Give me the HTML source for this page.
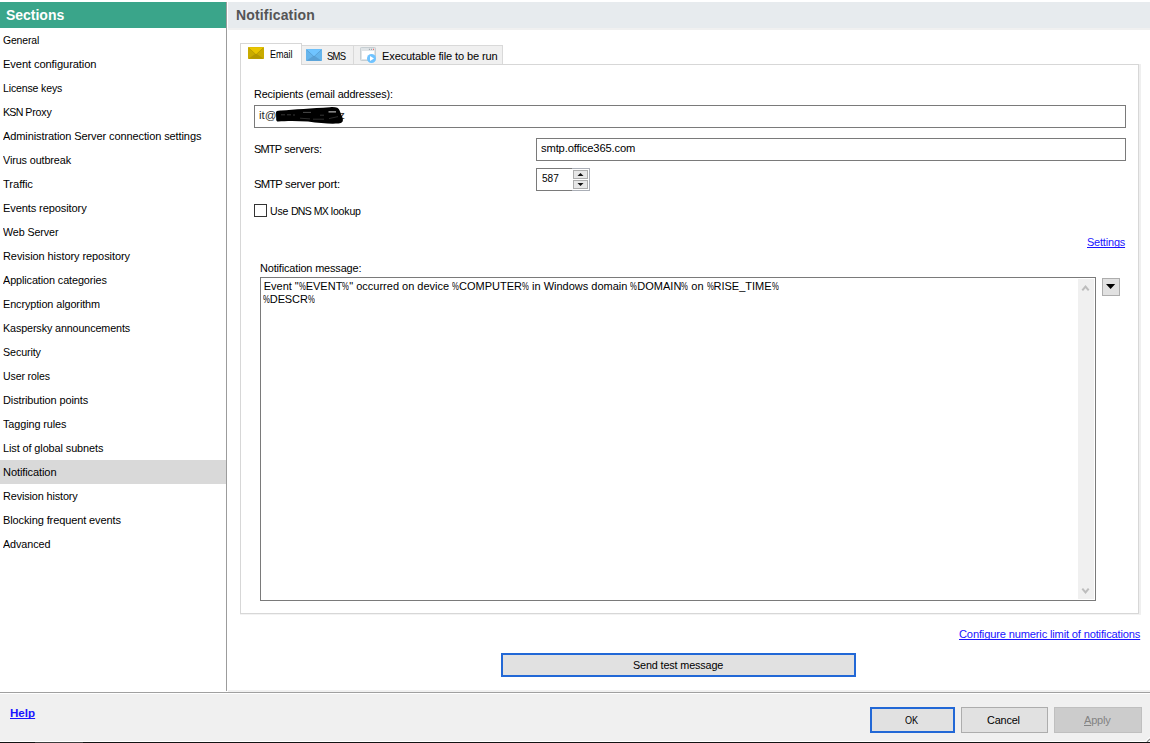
<!DOCTYPE html>
<html lang="en">
<head>
<meta charset="utf-8">
<title>Notification</title>
<style>
html,body{margin:0;padding:0;}
body{width:1150px;height:743px;overflow:hidden;background:#fff;position:relative;
  font-family:"Liberation Sans",sans-serif;font-size:11px;color:#000;}
.abs{position:absolute;}
.t{position:absolute;white-space:nowrap;line-height:13px;height:13px;font-size:11.6px;margin-top:-1px;}
#t_l1,#t_l2{font-size:11px;margin-top:0;}
/* sidebar */
#sechead{left:0;top:2px;width:226px;height:26px;background:#3aa58a;}
#sechead span{position:absolute;left:6px;top:5px;font-weight:bold;font-size:14px;line-height:17px;color:#fff;white-space:nowrap;}
#vline{left:226px;top:2px;width:1px;height:689px;background:#9c9c9c;}
#nav{left:0;top:28px;width:226px;margin:0;padding:0;list-style:none;}
#nav li{height:24px;line-height:24px;padding-left:3px;white-space:nowrap;font-size:11.6px;}
#nav li.sel{background:#d9d9d9;}
/* header */
#mainhead{left:228px;top:2px;width:922px;height:26px;background:#e7ebee;}
#mainhead2{left:228px;top:28px;width:922px;height:2px;background:#f0f0f0;}
#mainhead span{position:absolute;left:8px;top:5px;font-weight:bold;font-size:14px;line-height:17px;color:#555;white-space:nowrap;}
/* panel */
#panel{left:240px;top:64px;width:897px;height:548px;border:1px solid #d7d7d7;box-shadow:2px 0 0 #efefef,0 1px 0 #f3f3f3,2px 1px 0 #f1f1f1;}
.tab{position:absolute;box-sizing:border-box;background:#f0f0f0;border:1px solid #d9d9d9;border-bottom:none;}
#tab1{left:240px;top:43px;width:62px;height:22px;background:#fff;border-color:#d7d7d7;}
#tab2{left:301px;top:45px;width:53px;height:19px;border-left:none;}
#tab3{left:353px;top:45px;width:150px;height:19px;}
input,textarea{font-family:"Liberation Sans",sans-serif;}
.box{position:absolute;box-sizing:border-box;border:1px solid #7a7a7a;background:#fff;}
.btn{position:absolute;box-sizing:border-box;background:#e1e1e1;border:1px solid #adadad;text-align:center;}
.c{letter-spacing:-0.85px;}
.pc{display:inline-block;transform:scaleX(.7);transform-origin:0 50%;margin-right:-2.9px;}
a{color:#1a14ff;text-decoration:underline;text-decoration-skip-ink:none;}
#bottom{left:0;top:694px;width:1150px;height:47px;background:#f0f0f0;}
#hline{left:0;top:692px;width:1150px;height:1px;background:#a0a0a0;}
#hl2{left:228px;top:690px;width:922px;height:2px;background:#f1f1f1;}
/*FIT*/
#t_n0{letter-spacing:-0.148px;margin-left:0.00px;display:inline-block;transform-origin:0 50%;transform:scaleX(0.8980)}
#t_n1{letter-spacing:-0.111px;margin-left:0.00px;display:inline-block;transform-origin:0 50%;transform:scaleX(0.9614)}
#t_n2{letter-spacing:-0.144px;margin-left:0.00px;display:inline-block;transform-origin:0 50%;transform:scaleX(0.9066)}
#t_n3{letter-spacing:-0.196px;margin-left:0.00px;display:inline-block;transform-origin:0 50%;transform:scaleX(0.9182)}
#t_n4{letter-spacing:-0.114px;margin-left:0.00px;display:inline-block;transform-origin:0 50%;transform:scaleX(0.9505)}
#t_n5{letter-spacing:-0.119px;margin-left:0.00px;display:inline-block;transform-origin:0 50%;transform:scaleX(0.9320)}
#t_n6{letter-spacing:-0.110px;margin-left:0.00px;display:inline-block;transform-origin:0 50%;transform:scaleX(0.9700)}
#t_n7{letter-spacing:-0.126px;margin-left:0.00px;display:inline-block;transform-origin:0 50%;transform:scaleX(0.9556)}
#t_n8{letter-spacing:-0.096px;margin-left:0.00px;display:inline-block;transform-origin:0 50%;transform:scaleX(0.9232)}
#t_n9{letter-spacing:-0.078px;margin-left:0.00px;display:inline-block;transform-origin:0 50%;transform:scaleX(0.9485)}
#t_n10{letter-spacing:-0.114px;margin-left:0.00px;display:inline-block;transform-origin:0 50%;transform:scaleX(0.9358)}
#t_n11{letter-spacing:-0.108px;margin-left:0.00px;display:inline-block;transform-origin:0 50%;transform:scaleX(0.9370)}
#t_n12{letter-spacing:-0.133px;margin-left:0.00px;display:inline-block;transform-origin:0 50%;transform:scaleX(0.9286)}
#t_n13{letter-spacing:-0.124px;margin-left:0.00px;display:inline-block;transform-origin:0 50%;transform:scaleX(0.9248)}
#t_n14{letter-spacing:-0.137px;margin-left:0.00px;display:inline-block;transform-origin:0 50%;transform:scaleX(0.9106)}
#t_n15{letter-spacing:-0.113px;margin-left:0.00px;display:inline-block;transform-origin:0 50%;transform:scaleX(0.9461)}
#t_n16{letter-spacing:-0.100px;margin-left:0.00px;display:inline-block;transform-origin:0 50%;transform:scaleX(0.9359)}
#t_n17{letter-spacing:-0.097px;margin-left:0.00px;display:inline-block;transform-origin:0 50%;transform:scaleX(0.9393)}
#t_n18{letter-spacing:-0.107px;margin-left:0.00px;display:inline-block;transform-origin:0 50%;transform:scaleX(0.9533)}
#t_n19{letter-spacing:-0.137px;margin-left:0.00px;display:inline-block;transform-origin:0 50%;transform:scaleX(0.9371)}
#t_n20{letter-spacing:-0.124px;margin-left:0.00px;display:inline-block;transform-origin:0 50%;transform:scaleX(0.9507)}
#t_n21{letter-spacing:-0.097px;margin-left:0.00px;display:inline-block;transform-origin:0 50%;transform:scaleX(0.9329)}
#t_email{letter-spacing:0.000px;margin-left:0.00px;display:inline-block;transform-origin:0 50%;transform:scaleX(0.7800)}
#t_sms{letter-spacing:0.025px;margin-left:0.00px;display:inline-block;transform-origin:0 50%;transform:scaleX(0.8164)}
#t_exe{letter-spacing:-0.140px;margin-left:0.70px;display:inline-block;transform-origin:0 50%;transform:scaleX(0.9555)}
#t_rcp{letter-spacing:-0.129px;margin-left:0.00px;display:inline-block;transform-origin:0 50%;transform:scaleX(0.9318)}
#t_smtp{letter-spacing:-0.155px;margin-left:0.00px;display:inline-block;transform-origin:0 50%;transform:scaleX(0.9460)}
#t_port{letter-spacing:-0.175px;margin-left:0.00px;display:inline-block;transform-origin:0 50%;transform:scaleX(0.9722)}
#t_dns{letter-spacing:-0.193px;margin-left:0.00px;display:inline-block;transform-origin:0 50%;transform:scaleX(0.9095)}
#t_msg{letter-spacing:-0.145px;margin-left:0.00px;display:inline-block;transform-origin:0 50%;transform:scaleX(0.9400)}
#t_l1{letter-spacing:0.000px;margin-left:0.70px;display:inline-block;transform-origin:0 50%;transform:scaleX(1.0000)}
#t_l2{letter-spacing:-0.107px;margin-left:0.00px;display:inline-block;transform-origin:0 50%;transform:scaleX(1.0000)}
#t_set{letter-spacing:-0.194px;margin-left:0.00px;display:inline-block;transform-origin:0 50%;transform:scaleX(0.9438)}
#t_cfg{letter-spacing:-0.177px;margin-left:0.00px;display:inline-block;transform-origin:0 50%;transform:scaleX(0.9597)}
#t_send{letter-spacing:-0.150px;margin-left:0.00px;display:inline-block;transform-origin:0 50%;transform:scaleX(0.9331)}
#t_ok{letter-spacing:0.000px;margin-left:0.00px;display:inline-block;transform-origin:0 50%;transform:scaleX(0.7847)}
#t_cancel{letter-spacing:-0.171px;margin-left:0.00px;display:inline-block;transform-origin:0 50%;transform:scaleX(0.9367)}
#t_apply{letter-spacing:-0.210px;margin-left:0.00px;display:inline-block;transform-origin:0 50%;transform:scaleX(0.9510)}
#t_help{letter-spacing:0.000px;margin-left:0.00px;display:inline-block;transform-origin:0 50%;transform:scaleX(1.0000)}
#t_smtpv{letter-spacing:-0.146px;margin-left:0.00px;display:inline-block;transform-origin:0 50%;transform:scaleX(0.9650)}
#t_587{letter-spacing:0.000px;margin-left:0.00px;display:inline-block;transform-origin:0 50%;transform:scaleX(0.8700)}
#t_sec{letter-spacing:-0.023px;margin-left:0.00px;display:inline-block;transform-origin:0 50%;transform:scaleX(1.0000)}
#t_nh{letter-spacing:0.160px;margin-left:0.00px;display:inline-block;transform-origin:0 50%;transform:scaleX(1.0000)}
/*ENDFIT*/
#edge{left:0;top:742px;width:1150px;height:1px;background:#121212;}
#edge2{left:35px;top:742px;width:48px;height:1px;background:#3c3c3c;}
</style>
</head>
<body>
<!-- sidebar -->
<div class="abs" id="sechead"><span id="t_sec">Sections</span></div>
<ul class="abs" id="nav">
<li><span id="t_n0">General</span></li>
<li><span id="t_n1">Event configuration</span></li>
<li><span id="t_n2">License keys</span></li>
<li><span id="t_n3"><span class="c">KSN</span> Proxy</span></li>
<li><span id="t_n4">Administration Server connection settings</span></li>
<li><span id="t_n5">Virus outbreak</span></li>
<li><span id="t_n6">Traffic</span></li>
<li><span id="t_n7">Events repository</span></li>
<li><span id="t_n8">Web Server</span></li>
<li><span id="t_n9">Revision history repository</span></li>
<li><span id="t_n10">Application categories</span></li>
<li><span id="t_n11">Encryption algorithm</span></li>
<li><span id="t_n12">Kaspersky announcements</span></li>
<li><span id="t_n13">Security</span></li>
<li><span id="t_n14">User roles</span></li>
<li><span id="t_n15">Distribution points</span></li>
<li><span id="t_n16">Tagging rules</span></li>
<li><span id="t_n17">List of global subnets</span></li>
<li class="sel"><span id="t_n18">Notification</span></li>
<li><span id="t_n19">Revision history</span></li>
<li><span id="t_n20">Blocking frequent events</span></li>
<li><span id="t_n21">Advanced</span></li>
</ul>
<div class="abs" id="vline"></div>

<!-- main header -->
<div class="abs" id="mainhead"><span id="t_nh">Notification</span></div>
<div class="abs" id="mainhead2"></div>

<!-- tab panel -->
<div class="abs" id="panel"></div>
<div class="tab" id="tab2"></div>
<div class="tab" id="tab3"></div>
<div class="tab" id="tab1"></div>

<!-- tab icons -->
<svg class="abs" style="left:248px;top:47px" width="16" height="12" viewBox="0 0 16 12">
  <rect x="0" y="0" width="16" height="12" rx="0.8" fill="#c9ab00"/>
  <path d="M0.3 11.7 L8 6.6 L15.7 11.7 Z" fill="#b39700"/>
  <path d="M0.2 0.2 H15.8 L8 7.6 Z" fill="#e9c500"/>
  <path d="M0.6 0.8 L8 7.7 L15.4 0.8" fill="none" stroke="#a88c00" stroke-width="0.7" opacity="0.75"/>
</svg>
<svg class="abs" style="left:306px;top:49px" width="16" height="12" viewBox="0 0 16 12">
  <rect x="0" y="0" width="16" height="12" rx="0.8" fill="#66b5ec"/>
  <path d="M0.3 11.7 L8 6.6 L15.7 11.7 Z" fill="#5aa0d5"/>
  <path d="M0.2 0.2 H15.8 L8 7.6 Z" fill="#70c4ff"/>
  <path d="M0.6 0.8 L8 7.7 L15.4 0.8" fill="none" stroke="#4f8fc2" stroke-width="0.7" opacity="0.75"/>
</svg>
<svg class="abs" style="left:360px;top:47px" width="17" height="17" viewBox="0 0 17 17">
  <rect x="0.5" y="0.5" width="15" height="13" rx="0.8" fill="#dfe4e7" stroke="#c6ced2" stroke-width="1"/>
  <rect x="2" y="4" width="12" height="8" fill="#fff"/>
  <rect x="8.9" y="1.8" width="1" height="1" fill="#8a9298"/>
  <rect x="11" y="1.8" width="1" height="1" fill="#8a9298"/>
  <rect x="13" y="1.8" width="1" height="1" fill="#ee4b4b"/>
  <circle cx="11.5" cy="11.5" r="4.5" fill="#6fc3ff"/>
  <path d="M10 9 L14 11.5 L10 14 Z" fill="#fff"/>
</svg>

<span class="t" id="t_email" style="left:270px;top:48px">Email</span>
<span class="t" id="t_sms" style="left:327px;top:50px"><span class="c">SMS</span></span>
<span class="t" id="t_exe" style="left:381px;top:50px">Executable file to be run</span>

<!-- form -->
<span class="t" id="t_rcp" style="left:254px;top:88px">Recipients (email addresses):</span>
<div class="box" id="in_rcp" style="left:254px;top:105px;width:872px;height:23px"></div>
<span class="t" id="t_it" style="left:259px;top:109px;color:#2a2a2a">it@g</span>
<span class="t" id="t_z" style="left:339px;top:109px;color:#2a2a2a">z</span>
<svg class="abs" style="left:272px;top:105px" width="76" height="22" viewBox="0 0 76 22">
  <path d="M4 8 C3.6 6.2 5.5 5.4 9 5.5 C22 4.6 40 3.2 58 2.2 C63.5 1.8 67 2.8 67.6 5.6 L70.6 13 C71.6 16.4 70.2 18.2 66.5 18.5 C58 19 48 18.3 36 16.6 C25 15.7 13 15.8 6.5 16.6 C4.6 16.7 4 15.4 4.2 13.4 Z" fill="#000"/>
  <path d="M56.5 6.9 H64" stroke="#d8d8d8" stroke-width="1" fill="none"/>
  <path d="M31 7.4 H39" stroke="#6a6a6a" stroke-width="0.7" fill="none"/>
  <path d="M9 9.8 H13 M15 9.8 H19 M21 10 H23 M48 10.2 H52" stroke="#5a5a5a" stroke-width="0.6" fill="none"/>
  <path d="M57 13.6 L66 11.6 M28 13.2 L38 13.9 M41 14.2 H52" stroke="#4a4a4a" stroke-width="0.6" fill="none"/>
</svg>

<span class="t" id="t_smtp" style="left:254px;top:143px"><span class="c">SMTP</span> servers:</span>
<div class="box" id="in_smtp" style="left:536px;top:138px;width:590px;height:23px"></div>
<span class="t" id="t_smtpv" style="left:541px;top:142px">smtp.office365.com</span>

<span class="t" id="t_port" style="left:254px;top:178px"><span class="c">SMTP</span> server port:</span>
<div class="box" id="in_port" style="left:536px;top:168px;width:37px;height:23px;border-right:none"></div>
<div class="abs" id="spin" style="left:572px;top:168px;width:18px;height:23px;box-sizing:border-box;border:1px solid #aaaeb6;border-left:none;background:#fff"></div>
<div class="btn" style="left:573px;top:170px;width:15px;height:9px;background:#e7e7e7"></div>
<div class="btn" style="left:573px;top:180px;width:15px;height:9px;background:#e7e7e7"></div>
<svg class="abs" style="left:577px;top:172px" width="7" height="15" viewBox="0 0 7 15">
  <path d="M0.5 4 L3.5 1 L6.5 4 Z" fill="#111"/>
  <path d="M0.5 11 L3.5 14 L6.5 11 Z" fill="#111"/>
</svg>
<span class="t" id="t_587" style="left:542px;top:172px">587</span>

<div class="abs" id="chk" style="left:254px;top:204px;width:13px;height:13px;box-sizing:border-box;border:1px solid #333;background:#fff"></div>
<span class="t" id="t_dns" style="left:270px;top:205px">Use <span class="c">DNS</span> <span class="c">MX</span> lookup</span>

<a class="t" id="t_set" style="left:1087px;top:236px">Settings</a>

<span class="t" id="t_msg" style="left:260px;top:262px">Notification message:</span>
<div class="box" id="ta" style="left:260px;top:277px;width:836px;height:324px"></div>
<div class="abs" id="sb" style="left:1078px;top:279px;width:16px;height:320px;background:#f0f0f0"></div>
<svg class="abs" style="left:1081px;top:284px" width="10" height="8" viewBox="0 0 10 8"><path d="M1.3 6.4 L4.5 2.6 L7.7 6.4" fill="none" stroke="#bdbdbd" stroke-width="2"/></svg>
<svg class="abs" style="left:1081px;top:586px" width="10" height="8" viewBox="0 0 10 8"><path d="M1.3 2.6 L4.5 6.4 L7.7 2.6" fill="none" stroke="#bdbdbd" stroke-width="2"/></svg>
<span class="t" id="t_l1" style="left:263px;top:280px">Event "<span class="pc">%</span>EVENT<span class="pc">%</span>" occurred on device <span class="pc">%</span>COMPUTER<span class="pc">%</span> in Windows domain <span class="pc">%</span>DOMAIN<span class="pc">%</span> on <span class="pc">%</span>RISE_TIME<span class="pc">%</span></span>
<span class="t" id="t_l2" style="left:263px;top:293px"><span class="pc">%</span>DESCR<span class="pc">%</span></span>

<div class="btn" id="dd" style="left:1102px;top:278px;width:18px;height:18px"></div>
<svg class="abs" style="left:1106px;top:284px" width="10" height="6" viewBox="0 0 10 6"><path d="M0 0 H9.2 L4.6 5.1 Z" fill="#000"/></svg>

<a class="t" id="t_cfg" style="left:959px;top:628px">Configure numeric limit of notifications</a>

<div class="btn" id="b_send" style="left:501px;top:653px;width:355px;height:24px;border:2px solid #2268d6"></div>
<span class="t" id="t_send" style="left:633px;top:659px">Send test message</span>

<!-- bottom bar -->
<div class="abs" id="hl2"></div>
<div class="abs" id="hline"></div>
<div class="abs" id="bottom"></div>
<div class="abs" id="edge"></div>
<div class="abs" id="edge2"></div>
<svg class="abs" style="left:1144px;top:736px" width="6" height="6" viewBox="0 0 6 6"><path d="M1.5 6 L6 1.5" stroke="#fff" stroke-width="1.2" fill="none"/><path d="M3 6 L6 3" stroke="#8c8c8c" stroke-width="1.2" fill="none"/><path d="M5 6 L6 5" stroke="#fff" stroke-width="1" fill="none"/></svg>
<a class="t" id="t_help" style="left:10px;top:707px;font-weight:bold">Help</a>

<div class="btn" id="b_ok" style="left:870px;top:707px;width:85px;height:26px;border:2px solid #2268d6"></div>
<span class="t" id="t_ok" style="left:905px;top:714px">OK</span>
<div class="btn" id="b_cancel" style="left:961px;top:707px;width:87px;height:26px"></div>
<span class="t" id="t_cancel" style="left:987px;top:714px">Cancel</span>
<div class="btn" id="b_apply" style="left:1054px;top:707px;width:88px;height:26px;background:#cccccc;border-color:#bfbfbf"></div>
<span class="t" id="t_apply" style="left:1084px;top:714px;color:#838383"><u>A</u>pply</span>
</body>
</html>
